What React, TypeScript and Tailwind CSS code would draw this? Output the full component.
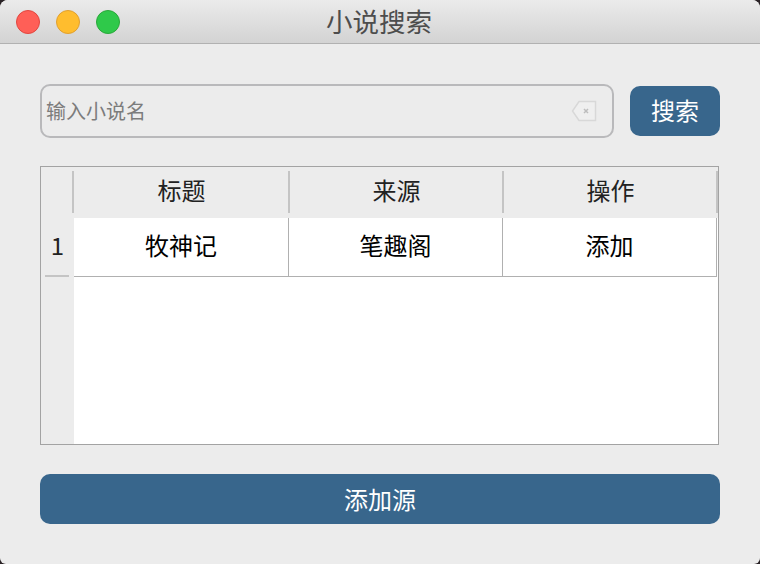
const FONT = "font-['Noto_Sans_CJK_SC','Noto_Sans_CJK_JP',sans-serif]";

const columns = ['标题', '来源', '操作'];
const cells = ['牧神记', '笔趣阁', '添加'];
const headWidths = ['w-[216px]', 'w-[214px]', 'w-[216px]'];
const cellWidths = ['w-[214px]', 'w-[214px]', 'w-[215px]'];

export default function App() {
  return (
    <div className="h-[564px] w-[760px] bg-[#2a2326]">
      <div className={`flex h-full w-full flex-col overflow-hidden rounded-t-[8px] rounded-b-[6px] bg-[#ececec] ${FONT}`}>
        {/* Title bar */}
        <div className="relative flex h-[44px] shrink-0 items-center justify-center border-b border-[#b1b1b1] bg-gradient-to-b from-[#ebebeb] to-[#d3d3d3] pr-[2px]">
          <div className="absolute left-[16px] top-[10px] flex gap-[16px]">
            <span className="h-[24px] w-[24px] rounded-full border border-[#e2463f] bg-[#ff5f57]" />
            <span className="h-[24px] w-[24px] rounded-full border border-[#e1a02f] bg-[#ffbd2e]" />
            <span className="h-[24px] w-[24px] rounded-full border border-[#2aa83a] bg-[#2fc94a]" />
          </div>
          <span className="text-[26.5px] leading-none text-[#4d4d4d]">小说搜索</span>
        </div>

        <div className="flex flex-1 flex-col px-[40px] pt-[40px]">
          {/* Search row */}
          <div className="flex items-center gap-[16px]">
            <div className="flex h-[54px] w-[574px] items-center justify-between rounded-[10px] border-2 border-[#b9b9bb] pl-[4px] pr-[15px]">
              <span className="text-[20px] leading-none text-[#7c7c7c]">输入小说名</span>
              <svg width="26" height="24" viewBox="0 0 26 24" fill="none">
                <path d="M8 2.5H24.5V21.5H8L1.5 12Z" stroke="#d8d8d8" strokeWidth="1.5" fill="#efefef" />
                <path d="M13 10L17 14M17 10L13 14" stroke="#bdbdbd" strokeWidth="1.5" />
              </svg>
            </div>
            <button className="flex h-[50px] w-[90px] items-center justify-center rounded-[10px] bg-[#38668c] pb-[3px] text-[24px] leading-none text-white">
              搜索
            </button>
          </div>

          {/* Table */}
          <div className="mt-[28px] flex h-[279px] w-[679px] border border-[#a3a3a3] bg-white">
            <div className="flex w-[33px] shrink-0 flex-col bg-[#ececec]">
              <div className="h-[51px]" />
              <div className="flex h-[59px] flex-col items-center">
                <span className="flex h-[57px] items-center pb-[4px] text-[24px] leading-none text-[#222222]">1</span>
                <span className="-ml-[1px] h-[2px] w-[24px] bg-[#c4c4c4]" />
              </div>
            </div>
            <div className="flex flex-1 flex-col">
              <div className="-ml-[2px] flex h-[51px] pt-[4px] pb-[5px] bg-[#ececec]">
                {columns.map((c, i) => (
                  <div key={c} className={`flex items-center justify-center border-l-2 border-[#c4c4c4] pb-[4px] pl-[1px] text-[24px] leading-none text-[#222222] ${headWidths[i]} ${i === 2 ? 'border-r-2' : ''}`}>
                    {c}
                  </div>
                ))}
              </div>
              <div className="flex h-[59px] w-[643px] border-b border-[#b0b0b0]">
                {cells.map((c, i) => (
                  <div key={c} className={`flex items-center justify-center border-[#b0b0b0] pb-[5px] text-[24px] leading-none text-black ${cellWidths[i]} ${i > 0 ? 'border-l' : ''} ${i === 2 ? 'border-r' : ''}`}>
                    {c}
                  </div>
                ))}
              </div>
            </div>
          </div>

          <button className="mt-[29px] flex h-[50px] w-[680px] items-center justify-center rounded-[10px] bg-[#38668c] pb-[1px] text-[24px] leading-none text-white">
            添加源
          </button>
        </div>
      </div>
    </div>
  );
}
